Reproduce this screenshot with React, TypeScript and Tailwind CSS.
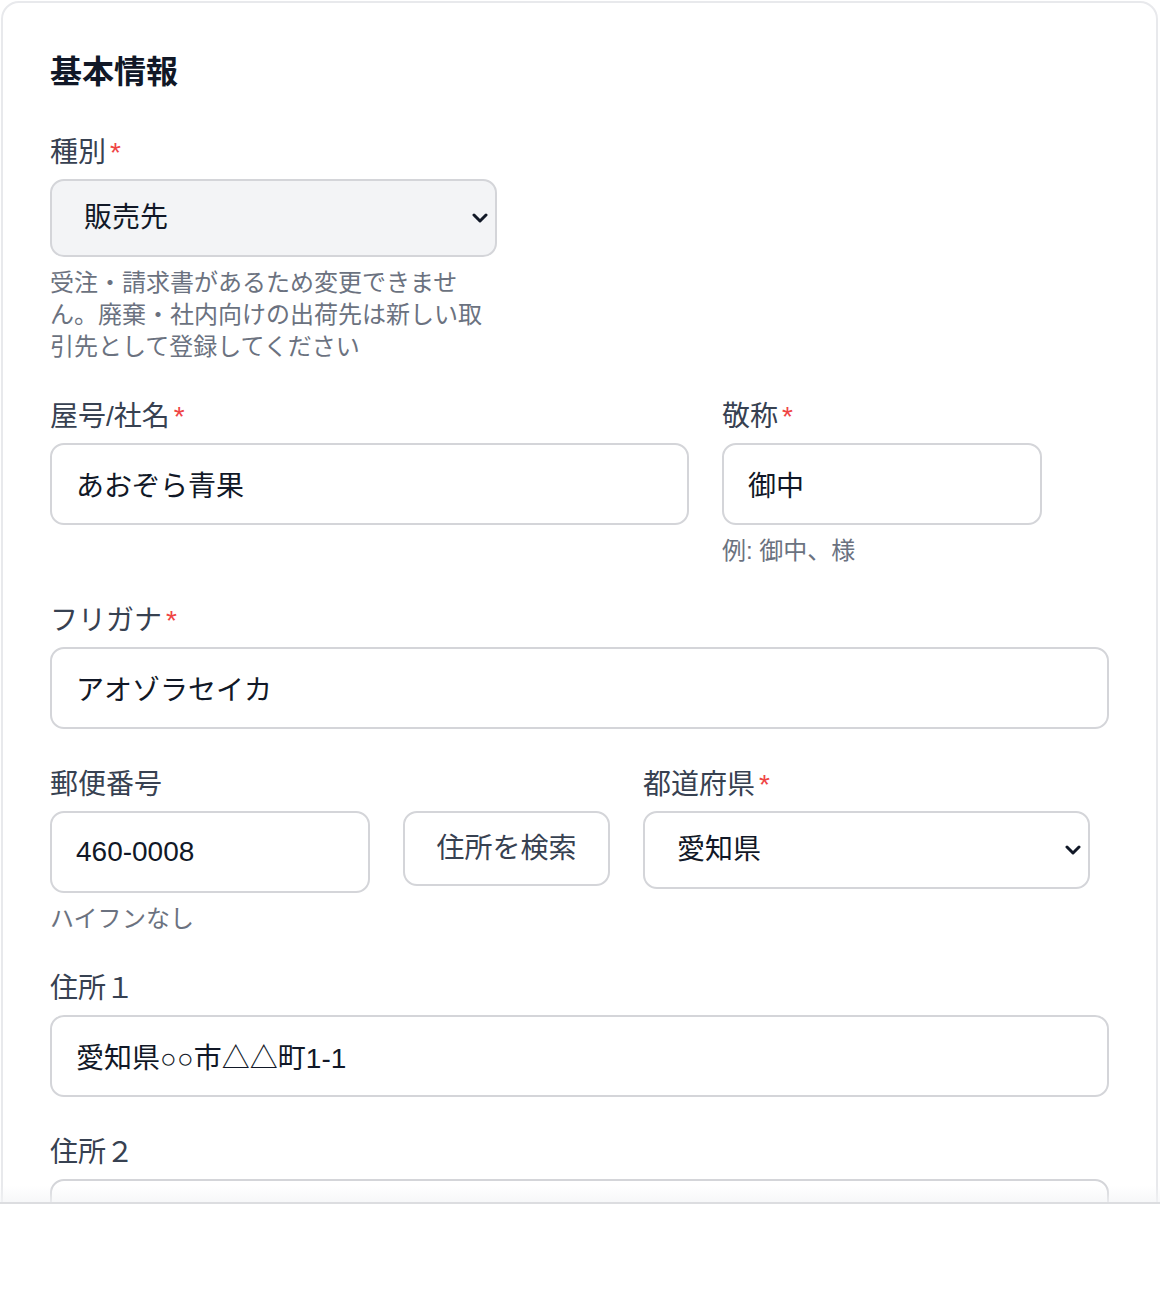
const font = { fontFamily: '"Liberation Sans", "Noto Sans CJK JP", sans-serif' };

function Chevron() {
  return (
    <svg
      viewBox="0 0 16 10"
      className="pointer-events-none absolute right-[9px] top-1/2 h-[10px] w-[16px] -translate-y-1/2 text-[#111827]"
      fill="none"
      stroke="currentColor"
      strokeWidth={3}
      strokeLinecap="round"
      strokeLinejoin="round"
    >
      <path d="M2 2l6 6 6-6" />
    </svg>
  );
}

function Label({ text, required }: { text: string; required?: boolean }) {
  return (
    <label className="block h-[42px] text-[28px] leading-[47px] text-[#374151]">
      {text}
      {required && <span className="ml-1 text-[#ef4444]">*</span>}
    </label>
  );
}

function TextInput({ value, className = "" }: { value: string; className?: string }) {
  return (
    <input
      readOnly
      value={value}
      className={`mt-2 block h-[82px] rounded-[14px] border-2 border-[#d4d5d9] bg-white px-[24px] text-[28px] text-[#111827] outline-none ${className}`}
    />
  );
}

function Select({ value, muted, className = "" }: { value: string; muted?: boolean; className?: string }) {
  return (
    <div className={`relative mt-2 ${className}`}>
      <select
        value={value}
        onChange={() => {}}
        className={`block h-[78px] w-full appearance-none rounded-[14px] border-2 border-[#d4d5d9] pl-8 pr-12 text-[28px] text-[#111827] outline-none ${muted ? "bg-[#f3f4f6]" : "bg-white"}`}
      >
        <option>{value}</option>
      </select>
      <Chevron />
    </div>
  );
}

function Help({ children }: { children: React.ReactNode }) {
  return <p className="-mb-[2px] mt-2 pt-[2px] text-[24px] leading-[32px] text-[#6b7280]">{children}</p>;
}

export default function App() {
  return (
    <div className="bg-white" style={font}>
      <div className="relative h-[1204px] overflow-hidden border-b-2 border-[#dcdde0] pl-px pr-[2px] pt-px">
        <div className="rounded-[18px] border-2 border-[#e8e9ec] bg-white px-[47px] pb-12 pt-[45px]">
          <h2 className="mb-[33px] text-[32px] font-bold leading-[48px] text-[#111827]">基本情報</h2>

          <div className="space-y-8">
            {/* 種別 */}
            <div>
              <Label text="種別" required />
              <div className="w-[447px]">
                <Select value="販売先" muted />
                <Help>受注・請求書があるため変更できません。廃棄・社内向けの出荷先は新しい取引先として登録してください</Help>
              </div>
            </div>

            {/* 屋号/社名 + 敬称 */}
            <div className="flex gap-[33px]">
              <div>
                <Label text="屋号/社名" required />
                <TextInput value="あおぞら青果" className="w-[639px]" />
              </div>
              <div>
                <Label text="敬称" required />
                <TextInput value="御中" className="w-[320px]" />
                <Help>例: 御中、様</Help>
              </div>
            </div>

            {/* フリガナ */}
            <div>
              <Label text="フリガナ" required />
              <TextInput value="アオゾラセイカ" className="w-full" />
            </div>

            {/* 郵便番号 + 都道府県 */}
            <div className="flex gap-[33px]">
              <div>
                <Label text="郵便番号" />
                <div className="flex items-start gap-[33px]">
                  <TextInput value="460-0008" className="w-[320px]" />
                  <button className="mt-2 h-[75px] w-[207px] rounded-[14px] border-2 border-[#d4d5d9] bg-white text-[28px] text-[#374151]">
                    住所を検索
                  </button>
                </div>
                <Help>ハイフンなし</Help>
              </div>
              <div>
                <Label text="都道府県" required />
                <Select value="愛知県" className="w-[447px]" />
              </div>
            </div>

            {/* 住所1 */}
            <div>
              <Label text="住所１" />
              <TextInput value="愛知県○○市△△町1-1" className="w-full" />
            </div>

            {/* 住所2 */}
            <div>
              <Label text="住所２" />
              <TextInput value="" className="w-full" />
            </div>
          </div>
        </div>
        <div className="pointer-events-none absolute inset-x-0 bottom-0 h-4 bg-gradient-to-b from-transparent to-[#f3f4f6]/70" />
      </div>
    </div>
  );
}
